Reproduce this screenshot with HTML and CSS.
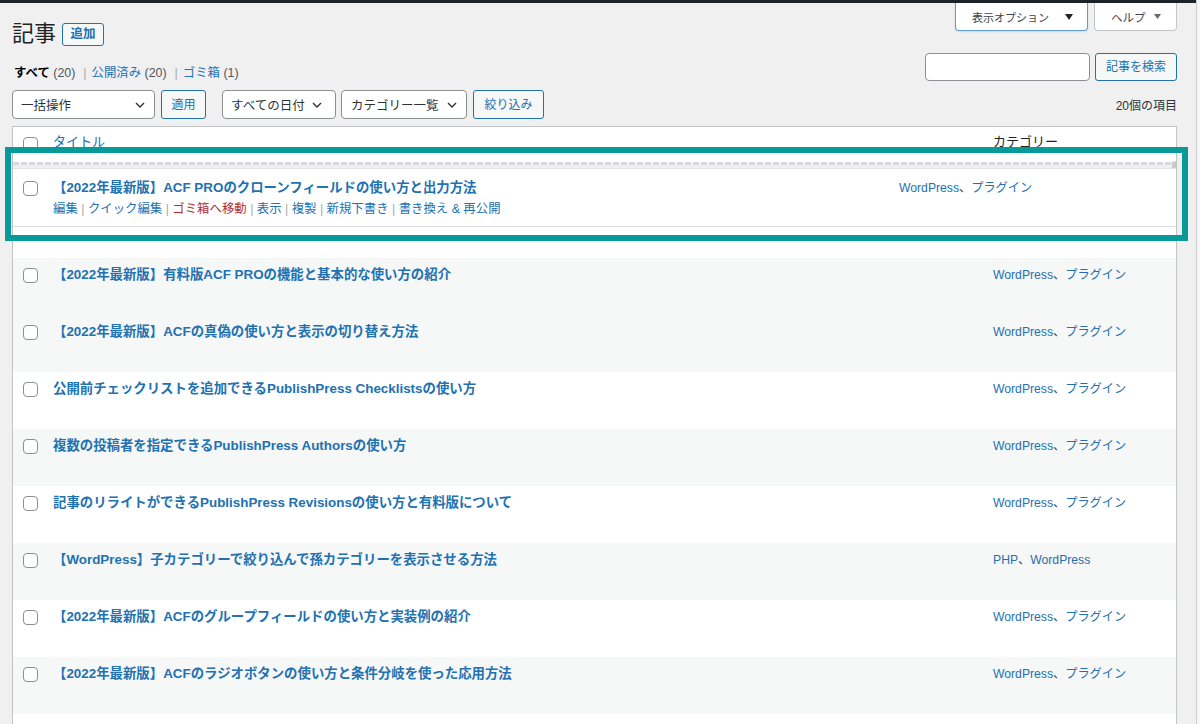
FILE: index.html
```html
<!DOCTYPE html>
<html lang="ja">
<head>
<meta charset="utf-8">
<title>記事</title>
<link rel="stylesheet" href="styles.css">
</head>
<body>
<div class="admin">
  <div class="main">
    <div class="topbar"></div>
    <div class="content">
      <div class="head">
        <div class="head-left">
          <div class="title-row">
            <h1>記事</h1>
            <a class="btn btn-add">追加</a>
          </div>
          <ul class="subsubsub">
            <li><span class="current">すべて</span> <span class="count">(20)</span></li>
            <li class="sep">|</li>
            <li><a>公開済み</a> <span class="count">(20)</span></li>
            <li class="sep">|</li>
            <li><a>ゴミ箱</a> <span class="count">(1)</span></li>
          </ul>
        </div>
        <div class="head-right">
          <div class="meta-tabs">
            <button class="tab tab-active">表示オプション<svg class="tri" width="8" height="6" viewBox="0 0 8 6"><path d="M0 0h8L4 6z" fill="#1d2327"/></svg></button>
            <button class="tab tab-help">ヘルプ<svg class="tri" width="7" height="5" viewBox="0 0 7 5"><path d="M0 0h7L3.5 5z" fill="#646970"/></svg></button>
          </div>
          <div class="search">
            <input type="search" class="search-input">
            <button class="btn">記事を検索</button>
          </div>
        </div>
      </div>

      <div class="filters">
        <div class="select sel-bulk"><span>一括操作</span><svg width="10" height="6" viewBox="0 0 10 6"><path d="M1 1l4 4 4-4" fill="none" stroke="#2c3338" stroke-width="1.4"/></svg></div>
        <button class="btn btn-apply">適用</button>
        <div class="select sel-date"><span>すべての日付</span><svg width="10" height="6" viewBox="0 0 10 6"><path d="M1 1l4 4 4-4" fill="none" stroke="#2c3338" stroke-width="1.4"/></svg></div>
        <div class="select sel-cat"><span>カテゴリー一覧</span><svg width="10" height="6" viewBox="0 0 10 6"><path d="M1 1l4 4 4-4" fill="none" stroke="#2c3338" stroke-width="1.4"/></svg></div>
        <button class="btn btn-filter">絞り込み</button>
        <div class="items-count">20個の項目</div>
      </div>

      <div class="table">
        <div class="thead">
          <div class="cb-col"><span class="cb"></span></div>
          <div class="th th-title"><a>タイトル</a></div>
          <div class="th th-cat">カテゴリー</div>
        </div>
        <div class="placeholder"></div>
        <div class="row dragged">
          <div class="cb-col"><span class="cb"></span></div>
          <div class="cell-title">
            <a class="row-title">【2022年最新版】ACF PROのクローンフィールドの使い方と出力方法</a>
            <div class="row-actions"><a>編集</a><span class="pipe"> | </span><a>クイック編集</a><span class="pipe"> | </span><a class="trash">ゴミ箱へ移動</a><span class="pipe"> | </span><a>表示</a><span class="pipe"> | </span><a>複製</a><span class="pipe"> | </span><a>新規下書き</a><span class="pipe"> | </span><a>書き換え &amp; 再公開</a></div>
          </div>
          <div class="cell-cat"><a>WordPress</a>、<a>プラグイン</a></div>
        </div>
        <div class="spacer-row"></div>

        <div class="row alt">
          <div class="cb-col"><span class="cb"></span></div>
          <div class="cell-title"><a class="row-title">【2022年最新版】有料版ACF PROの機能と基本的な使い方の紹介</a></div>
          <div class="cell-cat"><a>WordPress</a>、<a>プラグイン</a></div>
        </div>
        <div class="row alt">
          <div class="cb-col"><span class="cb"></span></div>
          <div class="cell-title"><a class="row-title">【2022年最新版】ACFの真偽の使い方と表示の切り替え方法</a></div>
          <div class="cell-cat"><a>WordPress</a>、<a>プラグイン</a></div>
        </div>
        <div class="row">
          <div class="cb-col"><span class="cb"></span></div>
          <div class="cell-title"><a class="row-title">公開前チェックリストを追加できるPublishPress Checklistsの使い方</a></div>
          <div class="cell-cat"><a>WordPress</a>、<a>プラグイン</a></div>
        </div>
        <div class="row alt">
          <div class="cb-col"><span class="cb"></span></div>
          <div class="cell-title"><a class="row-title">複数の投稿者を指定できるPublishPress Authorsの使い方</a></div>
          <div class="cell-cat"><a>WordPress</a>、<a>プラグイン</a></div>
        </div>
        <div class="row">
          <div class="cb-col"><span class="cb"></span></div>
          <div class="cell-title"><a class="row-title">記事のリライトができるPublishPress Revisionsの使い方と有料版について</a></div>
          <div class="cell-cat"><a>WordPress</a>、<a>プラグイン</a></div>
        </div>
        <div class="row alt">
          <div class="cb-col"><span class="cb"></span></div>
          <div class="cell-title"><a class="row-title">【WordPress】子カテゴリーで絞り込んで孫カテゴリーを表示させる方法</a></div>
          <div class="cell-cat"><a>PHP</a>、<a>WordPress</a></div>
        </div>
        <div class="row">
          <div class="cb-col"><span class="cb"></span></div>
          <div class="cell-title"><a class="row-title">【2022年最新版】ACFのグループフィールドの使い方と実装例の紹介</a></div>
          <div class="cell-cat"><a>WordPress</a>、<a>プラグイン</a></div>
        </div>
        <div class="row alt">
          <div class="cb-col"><span class="cb"></span></div>
          <div class="cell-title"><a class="row-title">【2022年最新版】ACFのラジオボタンの使い方と条件分岐を使った応用方法</a></div>
          <div class="cell-cat"><a>WordPress</a>、<a>プラグイン</a></div>
        </div>
        <div class="row">
          <div class="cb-col"><span class="cb"></span></div>
          <div class="cell-title"></div>
          <div class="cell-cat"></div>
        </div>
      </div>
    </div>
  </div>
  <div class="gutter"></div>
</div>
<div class="highlight"></div>
</body>
</html>
```

FILE: styles.css
```css
* { box-sizing: border-box; }
html, body { margin: 0; padding: 0; }
body {
  background: #f0f0f1;
  font-family: "Liberation Sans", "Noto Sans CJK JP", sans-serif;
  font-size: 12px;
  color: #3c434a;
  position: relative;
  overflow: hidden;
  height: 724px;
}
a { color: #2271b1; text-decoration: none; }
ul { list-style: none; margin: 0; padding: 0; }
button { font-family: inherit; }

.admin { display: flex; min-height: 724px; }
.main { flex: 1; min-width: 0; }
.gutter { width: 4px; border-left: 1px solid #cdcdcf; background: #f7f7f7; }
.topbar { height: 3px; background: #1d2327; }
.content { padding: 0 19px 0 12px; }

/* header */
.head { display: flex; justify-content: space-between; align-items: flex-start; }
.head-left { padding-top: 16px; }
.title-row { display: flex; align-items: center; gap: 6px; }
h1 {
  margin: 0;
  font-size: 22px;
  font-weight: 400;
  line-height: 29px;
  color: #1d2327;
}
.btn {
  display: inline-flex;
  align-items: center;
  justify-content: center;
  height: 28px;
  padding: 0 10px;
  border: 1px solid #2271b1;
  border-radius: 3px;
  background: #f6f7f7;
  color: #2271b1;
  font-size: 12px;
  line-height: 1;
  white-space: nowrap;
}
.btn-add { height: 23px; width: 42px; padding: 0; font-weight: 700; font-size: 12.5px; margin-top: 2px; }

.subsubsub {
  display: flex;
  align-items: center;
  margin-top: 15px;
  padding-left: 2px;
  line-height: 20px;
  font-size: 12.4px;
}
.subsubsub li { white-space: pre; }
.subsubsub .current { color: #000; font-weight: 700; }
.subsubsub .count { color: #50575e; }
.subsubsub .sep { color: #a7aaad; margin: 0 5px 0 8px; }

.head-right { display: flex; flex-direction: column; align-items: flex-end; }
.meta-tabs { display: flex; gap: 6px; }
.tab {
  display: flex;
  align-items: center;
  height: 28px;
  padding: 0 0 0 16px;
  border: 1px solid #c3c4c7;
  border-top: 0;
  border-radius: 0 0 4px 4px;
  background: #fff;
  color: #3c434a;
  font-size: 11px;
  white-space: nowrap;
}
.tab .tri { margin-left: 16px; flex: none; }
.tab-active { width: 133px; border-color: #5e9ad6; box-shadow: 0 1px 2px rgba(34,113,177,.15); }
.tab-help { width: 83px; font-size: 11.5px; }
.tab-help .tri { margin-left: 8px; }
.search { display: flex; gap: 5px; margin-top: 22px; }
.search-input {
  width: 165px;
  height: 28px;
  border: 1px solid #8c8f94;
  border-radius: 4px;
  background: #fff;
  margin: 0;
}

/* filters */
.filters {
  display: flex;
  align-items: center;
  margin-top: 7px;
  height: 29px;
}
.select {
  display: flex;
  align-items: center;
  justify-content: space-between;
  height: 29px;
  padding: 0 9px 0 8px;
  border: 1px solid #8c8f94;
  border-radius: 4px;
  background: #fff;
  color: #2c3338;
  font-size: 12.5px;
}
.sel-bulk { width: 143px; }
.sel-date { width: 114px; margin-left: 16px; padding-right: 13px; }
.sel-cat { width: 126px; margin-left: 5px; padding-left: 9px; }
.btn-apply { height: 29px; margin-left: 6px; width: 45px; padding: 0; }
.btn-filter { height: 29px; margin-left: 6px; width: 71px; padding: 0; }
.items-count { margin-left: auto; color: #2c3338; font-size: 12px; }

/* table */
.table {
  margin-top: 7px;
  background: #fff;
  border: 1px solid #c3c4c7;
  box-shadow: 0 1px 1px rgba(0,0,0,.04);
}
.thead, .row {
  display: grid;
  grid-template-columns: 40px 1fr 183px;
}
.thead { height: 34px; }
.cb-col { padding-left: 10px; }
.cb {
  display: block;
  width: 15px;
  height: 15px;
  border: 1px solid #8c8f94;
  border-radius: 4px;
  background: #fff;
}
.thead .cb-col { padding-top: 10px; }
.th { padding-top: 5px; line-height: 20px; font-size: 13px; }
.th-cat { color: #1d2327; }

.placeholder {
  height: 7px;
  border-top: 1px solid #fff;
  background:
    repeating-linear-gradient(90deg, #d9d9db 0 6px, #f4f4f5 6px 8px) top left / 100% 3px no-repeat,
    #efeff0;
  border-right: 4px solid #c9c9cb;
}

.row { height: 57px; }
.row.alt { background: #f6f7f7; }
.row .cb-col { padding-top: 10px; }
.cell-title { padding-top: 7px; min-width: 0; }
.row-title {
  display: block;
  font-size: 13.4px;
  font-weight: 700;
  line-height: 20px;
  white-space: nowrap;
}
.cell-cat {
  padding-top: 7px;
  line-height: 20px;
  font-size: 12.2px;
  color: #3c434a;
  white-space: nowrap;
}

.row.dragged {
  grid-template-columns: 40px 1fr 277px;
  height: 59px;
  border-top: 1px solid #e2e2e4;
  border-bottom: 1px solid #dcdcde;
}
.row.dragged .cb-col { padding-top: 12px; }
.row.dragged .cell-title { padding-top: 9px; }
.row.dragged .cell-cat { padding-top: 9px; }
.row-actions {
  margin-top: 2px;
  line-height: 18px;
  font-size: 12.4px;
  white-space: pre;
}
.row-actions .pipe { color: #a7aaad; }
.row-actions .trash { color: #b32d2e; }

.spacer-row { height: 31px; }

/* annotation overlay */
.highlight {
  position: absolute;
  left: 5px;
  top: 147px;
  width: 1183px;
  height: 94px;
  border: 6px solid #079a99;
  pointer-events: none;
}
```
